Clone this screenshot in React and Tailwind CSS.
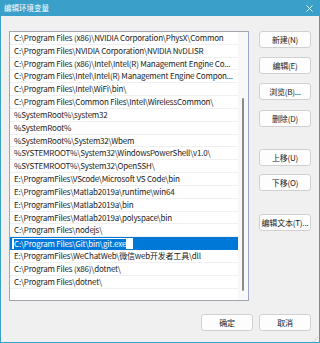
import React from 'react';

const paths = [
  'C:\\Program Files (x86)\\NVIDIA Corporation\\PhysX\\Common',
  'C:\\Program Files\\NVIDIA Corporation\\NVIDIA NvDLISR',
  'C:\\Program Files (x86)\\Intel\\Intel(R) Management Engine Co...',
  'C:\\Program Files\\Intel\\Intel(R) Management Engine Compon...',
  'C:\\Program Files\\Intel\\WiFi\\bin\\',
  'C:\\Program Files\\Common Files\\Intel\\WirelessCommon\\',
  '%SystemRoot%\\system32',
  '%SystemRoot%',
  '%SystemRoot%\\System32\\Wbem',
  '%SYSTEMROOT%\\System32\\WindowsPowerShell\\v1.0\\',
  '%SYSTEMROOT%\\System32\\OpenSSH\\',
  'E:\\ProgramFiles\\VScode\\Microsoft VS Code\\bin',
  'E:\\ProgramFiles\\Matlab2019a\\runtime\\win64',
  'E:\\ProgramFiles\\Matlab2019a\\bin',
  'E:\\ProgramFiles\\Matlab2019a\\polyspace\\bin',
  'C:\\Program Files\\nodejs\\',
  'C:\\Program Files\\Git\\bin\\git.exe',
  'E:\\ProgramFiles\\WeChatWeb\\微信web开发者工具\\dll',
  'C:\\Program Files (x86)\\dotnet\\',
  'C:\\Program Files\\dotnet\\',
];

function Btn({ children, className = '' }) {
  return (
    <button
      className={`h-[17px] w-[52px] whitespace-nowrap rounded-[3px] border border-[#d0d0d0] bg-[#fdfdfd] px-0 text-[8px] leading-none tracking-[-0.2px] text-[#1a1a1a] ${className}`}
    >
      {children}
    </button>
  );
}

export default function App() {
  const selected = 16;
  return (
    <div
      className="flex h-[343px] w-[320px] flex-col border border-t-0 border-[#3a9fc9] bg-[#f0f0f0] text-[#1a1a1a]"
      style={{ fontFamily: '"Noto Sans CJK SC", "Noto Sans", sans-serif' }}
    >
      {/* Title bar */}
      <div className="flex h-[16px] shrink-0 items-center justify-between bg-[#3a9fc9] pl-[3px] pr-[4px] text-white">
        <span className="text-[7.5px] leading-none">编辑环境变量</span>
        <svg width="7" height="7" viewBox="0 0 8 8" className="mr-[2px]">
          <path d="M0.5 0.5 L7.5 7.5 M7.5 0.5 L0.5 7.5" stroke="white" strokeWidth="1" />
        </svg>
      </div>

      <div className="flex flex-1 pl-[8px] pt-[15px]">
        {/* List */}
        <div className="flex h-[270px] w-[240px] border border-[#a0a4ab] border-r-[#9ea6c8] bg-white">
          <div className="min-w-0 flex-1 overflow-hidden">
            {paths.map((p, i) =>
              i === selected ? (
                <div key={i} className="flex h-[12.84px] items-center bg-[#0078d7] pl-[2px]">
                  <div className="flex h-[11px] w-[121px] items-center border border-white bg-white pl-[1px]">
                    <span className="whitespace-nowrap bg-[#0078d7] text-[8px] leading-[10px] tracking-[-0.2px] text-white">
                      {p}
                    </span>
                  </div>
                </div>
              ) : (
                <div
                  key={i}
                  className="flex h-[12.84px] items-center overflow-hidden whitespace-nowrap border-b border-[#f0f0f0] pl-[4px] text-[8px] leading-none tracking-[-0.2px]"
                >
                  {p}
                </div>
              )
            )}
          </div>
          {/* Scrollbar */}
          <div className="flex w-[10px] shrink-0 justify-center bg-[#f8f8f8] pt-[66px] pb-[9px]">
            <div className="w-[2px] rounded-full bg-[#8a8a8a]" />
          </div>
        </div>

        {/* Buttons */}
        <div className="ml-[10px] flex flex-col">
          <Btn>新建(N)</Btn>
          <Btn className="mt-[9px]">编辑(E)</Btn>
          <Btn className="mt-[9px]">浏览(B)...</Btn>
          <Btn className="mt-[10px]">删除(D)</Btn>
          <Btn className="mt-[22px]">上移(U)</Btn>
          <Btn className="mt-[8px]">下移(O)</Btn>
          <Btn className="mt-[23px]">编辑文本(T)...</Btn>
        </div>
      </div>

      {/* Footer */}
      <div className="relative flex h-[28px] shrink-0 justify-end gap-[6px] pr-[8px]">
        <Btn>确定</Btn>
        <Btn>取消</Btn>
        <div className="absolute bottom-[1px] right-[1px] text-[5px] leading-none text-[#999]">⋰</div>
      </div>
    </div>
  );
}
